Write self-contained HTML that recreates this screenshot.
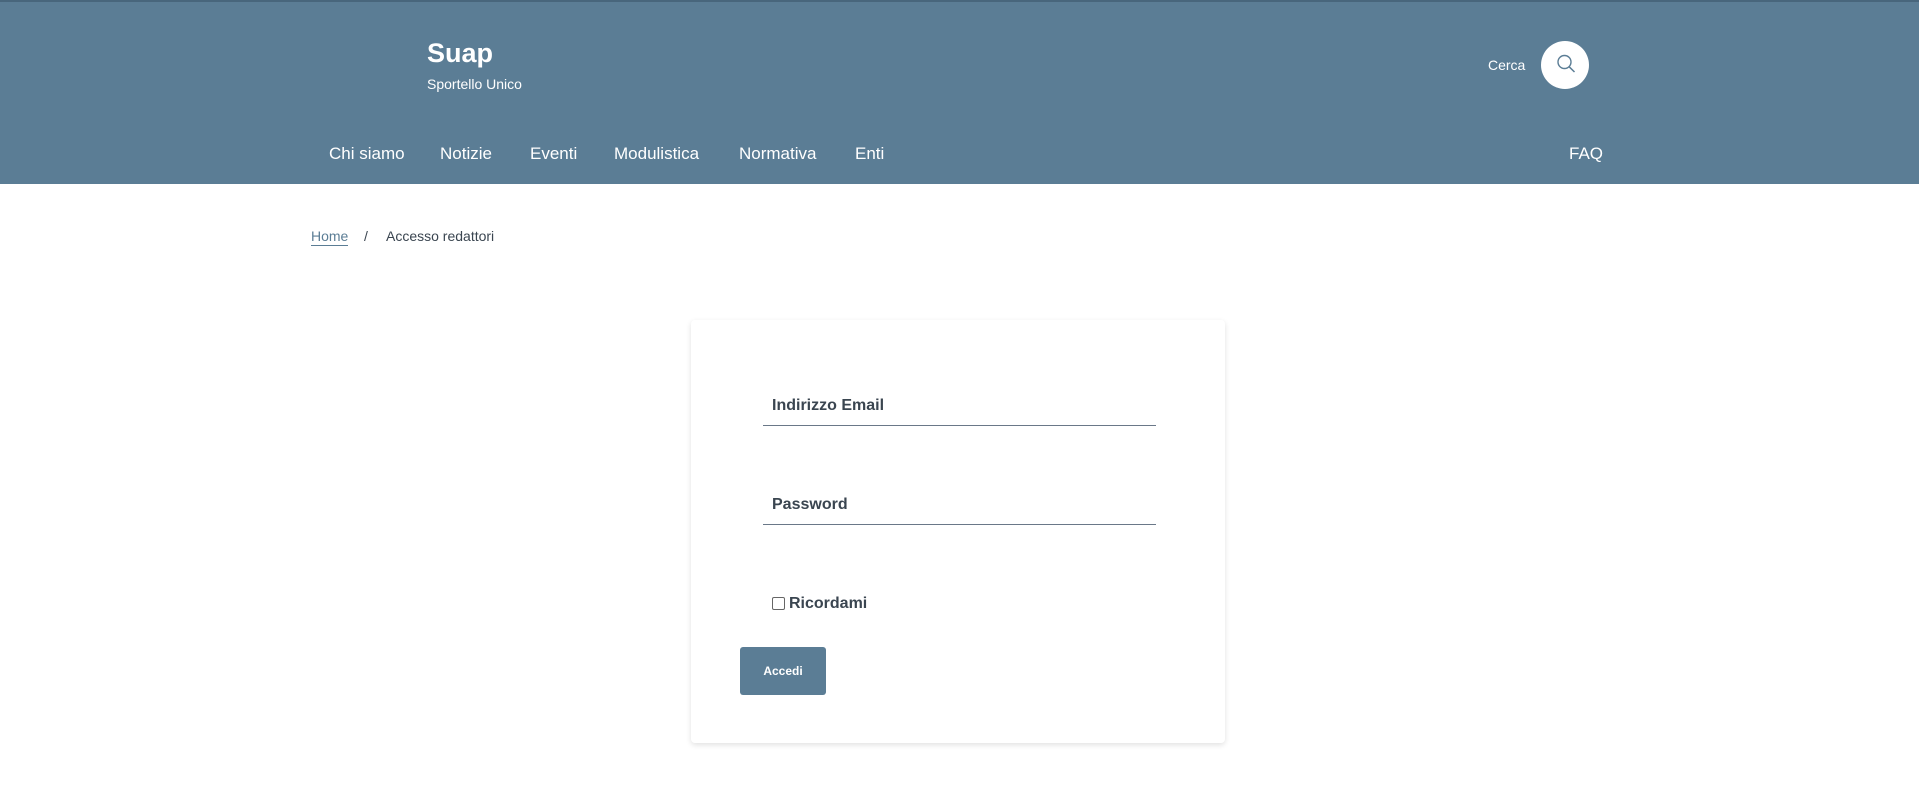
<!DOCTYPE html>
<html><head><meta charset="utf-8"><style>
*{box-sizing:border-box;margin:0;padding:0}
body{width:1919px;height:789px;background:#fff;font-family:"Liberation Sans",sans-serif;position:relative;overflow:hidden}
.hdr{position:absolute;left:0;top:0;width:1919px;height:184px;background:#5b7d95;border-top:2px solid #48667c}
.a{position:absolute;white-space:nowrap}
.w{color:#fff}
.nav{font-size:17px;top:144px}
.card{position:absolute;left:691px;top:320px;width:534px;height:423px;background:#fff;border-radius:4px;box-shadow:0 2px 6px rgba(0,0,0,.12)}
.lbl{font-size:16px;font-weight:bold;color:#3a4550}
.line{position:absolute;left:763px;width:393px;height:1px;background:#6a7888}
</style></head><body>
<div class="hdr"></div>
<div class="a w" style="left:427px;top:38px;font-size:27px;font-weight:bold">Suap</div>
<div class="a w" style="left:427px;top:76px;font-size:14px">Sportello Unico</div>
<div class="a w nav" style="left:329px">Chi siamo</div>
<div class="a w nav" style="left:440px">Notizie</div>
<div class="a w nav" style="left:530px">Eventi</div>
<div class="a w nav" style="left:614px">Modulistica</div>
<div class="a w nav" style="left:739px">Normativa</div>
<div class="a w nav" style="left:855px">Enti</div>
<div class="a w nav" style="left:1569px">FAQ</div>
<div class="a w" style="left:1488px;top:57px;font-size:14px">Cerca</div>
<div class="a" style="left:1541px;top:41px;width:48px;height:48px;border-radius:50%;background:#fff"></div>
<svg class="a" style="left:1553px;top:51px" width="26" height="26" viewBox="0 0 26 26"><circle cx="11.5" cy="11" r="6.5" fill="none" stroke="#5b7d95" stroke-width="1.4"/><path d="M16.2 15.8L21.5 21" stroke="#5b7d95" stroke-width="1.5" fill="none"/></svg>
<div class="a" style="left:311px;top:228px;font-size:14px;color:#5b7d95;border-bottom:1.5px solid #5b7d95;line-height:17px">Home</div>
<div class="a" style="left:364px;top:228px;font-size:14px;color:#3a4550;line-height:17px">/</div>
<div class="a" style="left:386px;top:228px;font-size:14px;color:#3a4550;line-height:17px">Accesso redattori</div>
<div class="card"></div>
<div class="a lbl" style="left:772px;top:397px">Indirizzo Email</div>
<div class="line" style="top:425px"></div>
<div class="a lbl" style="left:772px;top:496px">Password</div>
<div class="line" style="top:524px"></div>
<div class="a" style="left:772px;top:597px;width:13px;height:13px;border:1px solid #666;border-radius:2px;background:#fff"></div>
<div class="a lbl" style="left:789px;top:595px">Ricordami</div>
<div class="a" style="left:740px;top:647px;width:86px;height:48px;background:#5b7d95;border-radius:3px;color:#fff;font-size:12px;font-weight:bold;text-align:center;line-height:48px">Accedi</div>
</body></html>
